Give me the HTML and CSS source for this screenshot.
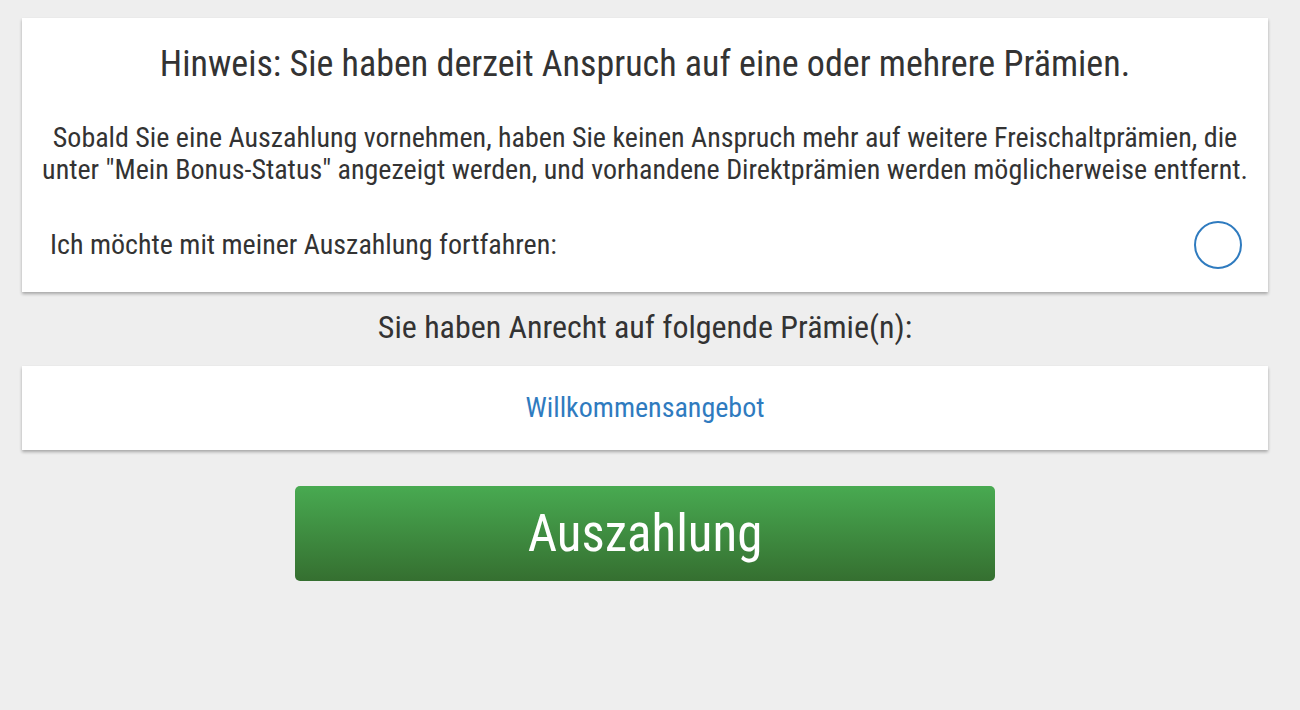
FILE: index.html
```html
<!DOCTYPE html>
<html lang="de">
<head>
    <meta charset="UTF-8">
    <meta name="viewport" content="width=device-width, initial-scale=1.0">
    <title>Auszahlung</title>
    <link rel="stylesheet" href="styles.css">
</head>
<body>
    <div class="page">
        <div class="card notice">
            <h2 class="notice-title">Hinweis: Sie haben derzeit Anspruch auf eine oder mehrere Prämien.</h2>
            <p class="notice-text">Sobald Sie eine Auszahlung vornehmen, haben Sie keinen Anspruch mehr auf weitere Freischaltprämien, die unter "Mein Bonus-Status" angezeigt werden, und vorhandene Direktprämien werden möglicherweise entfernt.</p>
            <label class="confirm-row">
                <span>Ich möchte mit meiner Auszahlung fortfahren:</span>
                <span class="radio"></span>
            </label>
        </div>

        <h3 class="bonus-heading">Sie haben Anrecht auf folgende Prämie(n):</h3>

        <div class="card bonus-list">
            <a href="#" class="bonus-link">Willkommensangebot</a>
        </div>

        <div class="actions">
            <button class="btn-withdraw">Auszahlung</button>
        </div>
    </div>
</body>
</html>
```

FILE: styles.css
```css
body {
    margin: 0;
    padding: 0;
    background-color: #eeeeee;
    font-family: "Roboto Condensed", Roboto, "Liberation Sans", sans-serif;
    font-stretch: condensed;
    color: #333;
}
.page { padding: 18px 32px 0 22px; }
.card {
    background: #fff;
    box-shadow: 0 2px 3px rgba(0,0,0,0.3);
}
.notice { padding: 24px 18px 23px; text-align: center; }
.notice-title { margin: 0; font-size: 36px; font-weight: 400; line-height: 44px; }
.notice-text { margin: 36px 0 0; font-size: 28px; line-height: 32px; }
.confirm-row {
    display: flex;
    align-items: center;
    justify-content: space-between;
    margin: 35px 8px 0 10px;
    font-size: 28px;
    line-height: 32px;
    text-align: left;
}
.radio {
    width: 44px;
    height: 44px;
    border: 2px solid #2f7bbf;
    border-radius: 50%;
}
.bonus-heading { margin: 0; padding: 15px 0 19px; text-align: center; font-size: 32px; font-weight: 400; line-height: 40px; }
.bonus-list { display: flex; justify-content: center; padding: 24px 0; }
.bonus-link { display: block; color: #2f7bbf; text-decoration: none; font-size: 28px; line-height: 36px; }
.actions { display: flex; justify-content: center; padding-top: 36px; }
.btn-withdraw {
    width: 700px;
    height: 95px;
    border: none;
    border-radius: 5px;
    background: linear-gradient(180deg, #48aa51 0%, #356f30 100%);
    color: #fff;
    font-family: inherit;
    font-stretch: condensed;
    font-size: 51px;
    cursor: pointer;
}
```
